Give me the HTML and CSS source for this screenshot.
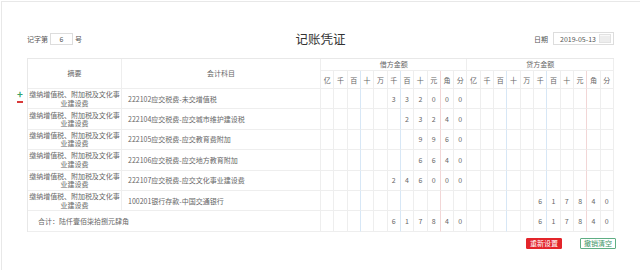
FILE: index.html
```html
<!DOCTYPE html>
<html>
  <head>
    <title>记账凭证</title>
    <meta charset="utf-8" />
    <meta name="viewport" content="width=device-width, initial-scale=1" />
    <link rel="stylesheet" href="styles.css">
  </head>
  <body>
    <div class="page">
      <div class="sheet">
        <div class="top">
          <div class="no">记字第 <span class="nobox">6</span> 号</div>
          <h1>记账凭证</h1>
          <div class="date">日期
            <span class="datebox">2019-05-13<svg class="cal" width="12" height="9" viewBox="0 0 12 9"><rect width="12" height="9" fill="#e2e2e2"/><path d="M2 2v6M4 2v6M6 2v6M8 2v6M10 2v6M1 1.5h10" stroke="#fff" stroke-width="0.8"/></svg></span>
          </div>
        </div>
        <table class="voucher">
          <colgroup>
            <col class="c-memo"><col class="c-acct">
          </colgroup>
          <thead>
            <tr class="h-top">
              <th rowspan="2">摘要</th>
              <th rowspan="2">会计科目</th>
              <th colspan="11">借方金额</th>
              <th colspan="11">贷方金额</th>
            </tr>
            <tr class="h-unit" id="units"></tr>
          </thead>
          <tbody id="rows"></tbody>
        </table>
        <div class="actions">
          <button class="btn btn-red">重新设置</button>
          <button class="btn btn-green">撤销清空</button>
        </div>
      </div>
    </div>
    <script>
      var units = "亿千百十万千百十元角分".split("");
      var memo = "缴纳增值税、附加税及文化事业建设费";
      var data = [
        [memo, "222102应交税费-未交增值税", "332000", ""],
        [memo, "222104应交税费-应交城市维护建设税", "23240", ""],
        [memo, "222105应交税费-应交教育费附加", "9960", ""],
        [memo, "222106应交税费-应交地方教育附加", "6640", ""],
        [memo, "222107应交税费-应交文化事业建设费", "246000", ""],
        [memo, "100201银行存款-中国交通银行", "", "617840"]
      ];

      function lineClass(i) {
        if (i == 2 || i == 5) return "d b";
        if (i == 8) return "d r";
        return "d";
      }
      function digitCells(val, tag) {
        var html = "";
        var pad = 11 - val.length;
        for (var i = 0; i < 11; i++) {
          var ch = i >= pad ? val.charAt(i - pad) : "";
          html += "<" + tag + ' class="' + lineClass(i) + '">' + ch + "</" + tag + ">";
        }
        return html;
      }

      var unitRow = document.getElementById("units");
      var head = "";
      for (var k = 0; k < 2; k++) {
        for (var i = 0; i < 11; i++) {
          head += '<th class="' + lineClass(i) + '">' + units[i] + "</th>";
        }
      }
      unitRow.innerHTML = head;

      var body = "";
      data.forEach(function (row, n) {
        body += "<tr>";
        body += '<td class="memo">' + (n == 0 ? '<span class="ops"><i class="plus">+</i><i class="minus"></i></span>' : "") + row[0] + "</td>";
        body += '<td class="acct">' + row[1] + "</td>";
        body += digitCells(row[2], "td") + digitCells(row[3], "td");
        body += "</tr>";
      });
      body += '<tr class="total"><td colspan="2" class="sum">合计：陆仟壹佰柒拾捌元肆角</td>';
      body += digitCells("617840", "td") + digitCells("617840", "td") + "</tr>";
      document.getElementById("rows").innerHTML = body;
    </script>
  </body>
</html>
```

FILE: styles.css
```css
html,
body {
  margin: 0;
  height: 100%;
}
body {
  font-family: "Noto Sans CJK SC", "Noto Sans", sans-serif;
  color: #666;
  background: #fff;
}
.page {
  height: 100%;
  margin: 1px 0 0 1px;
  border-top: 1px solid #e8e8e8;
  border-left: 1px solid #e8e8e8;
  box-sizing: border-box;
}
.sheet {
  width: 587px;
  margin-left: 25px;
}
.top {
  display: grid;
  grid-template-columns: 1fr auto 1fr;
  align-items: center;
  height: 18px;
  margin-top: 27px;
  margin-bottom: 11px;
  font-size: 7px;
  color: #555;
}
.top h1 {
  margin: 0;
  font-size: 12.5px;
  font-weight: normal;
  color: #333;
}
.no {
  display: flex;
  align-items: center;
  gap: 2px;
}
.nobox {
  display: inline-block;
  width: 21px;
  height: 10px;
  line-height: 10px;
  border: 1px solid #ddd;
  text-align: center;
}
.date {
  display: flex;
  align-items: center;
  justify-content: flex-end;
  gap: 5px;
}
.datebox {
  display: flex;
  align-items: center;
  justify-content: space-between;
  width: 51px;
  height: 11px;
  padding: 0 2px 0 6px;
  border: 1px solid #ddd;
}
.cal {
  display: block;
}

.voucher {
  width: 587px;
  table-layout: fixed;
  border-collapse: separate;
  border-spacing: 0;
  border-top: 1px solid #e8e8e8;
  border-left: 1px solid #e8e8e8;
  font-size: 7px;
  color: #666;
}
.c-memo {
  width: 94px;
}
.c-acct {
  width: 199px;
}
.voucher th,
.voucher td {
  padding: 0;
  border-right: 1px solid #eeeeee;
  border-bottom: 1px solid #eeeeee;
  font-weight: normal;
  text-align: center;
  white-space: nowrap;
  overflow: hidden;
}
.voucher th.b,
.voucher td.b {
  border-right-color: #d7e7f6;
}
.voucher th.r,
.voucher td.r {
  border-right-color: #f2d6d6;
}
.h-top th {
  height: 11px;
  line-height: 11px;
}
.h-unit th {
  height: 17px;
}
.voucher tbody td {
  height: 19.4px;
}
.voucher td.memo {
  position: relative;
  overflow: visible;
  white-space: normal;
  line-height: 8.5px;
  padding: 0;
  letter-spacing: -0.05px;
}
.voucher td.acct {
  text-align: left;
  padding-left: 6px;
}
.voucher td.sum {
  text-align: left;
  padding-left: 10px;
}
.ops {
  position: absolute;
  left: -12px;
  top: 1px;
  width: 8px;
}
.ops i {
  display: block;
  font-style: normal;
}
.plus {
  color: #35a36a;
  font-size: 10px;
  line-height: 8px;
  font-weight: bold;
}
.minus {
  width: 6px;
  height: 2px;
  margin: 3px 0 0 1px;
  background: #d93a3a;
}

.actions {
  display: flex;
  justify-content: flex-end;
  gap: 18px;
  margin-top: 6px;
  margin-right: -2px;
}
.btn {
  height: 11px;
  padding: 0 3px;
  border: 1px solid;
  border-radius: 1px;
  font-family: inherit;
  font-size: 7px;
  line-height: 9px;
}
.btn-red {
  background: #e3252b;
  border-color: #e3252b;
  color: #fff;
}
.btn-green {
  background: #fff;
  border-color: #5fae84;
  color: #3d9667;
}
```
